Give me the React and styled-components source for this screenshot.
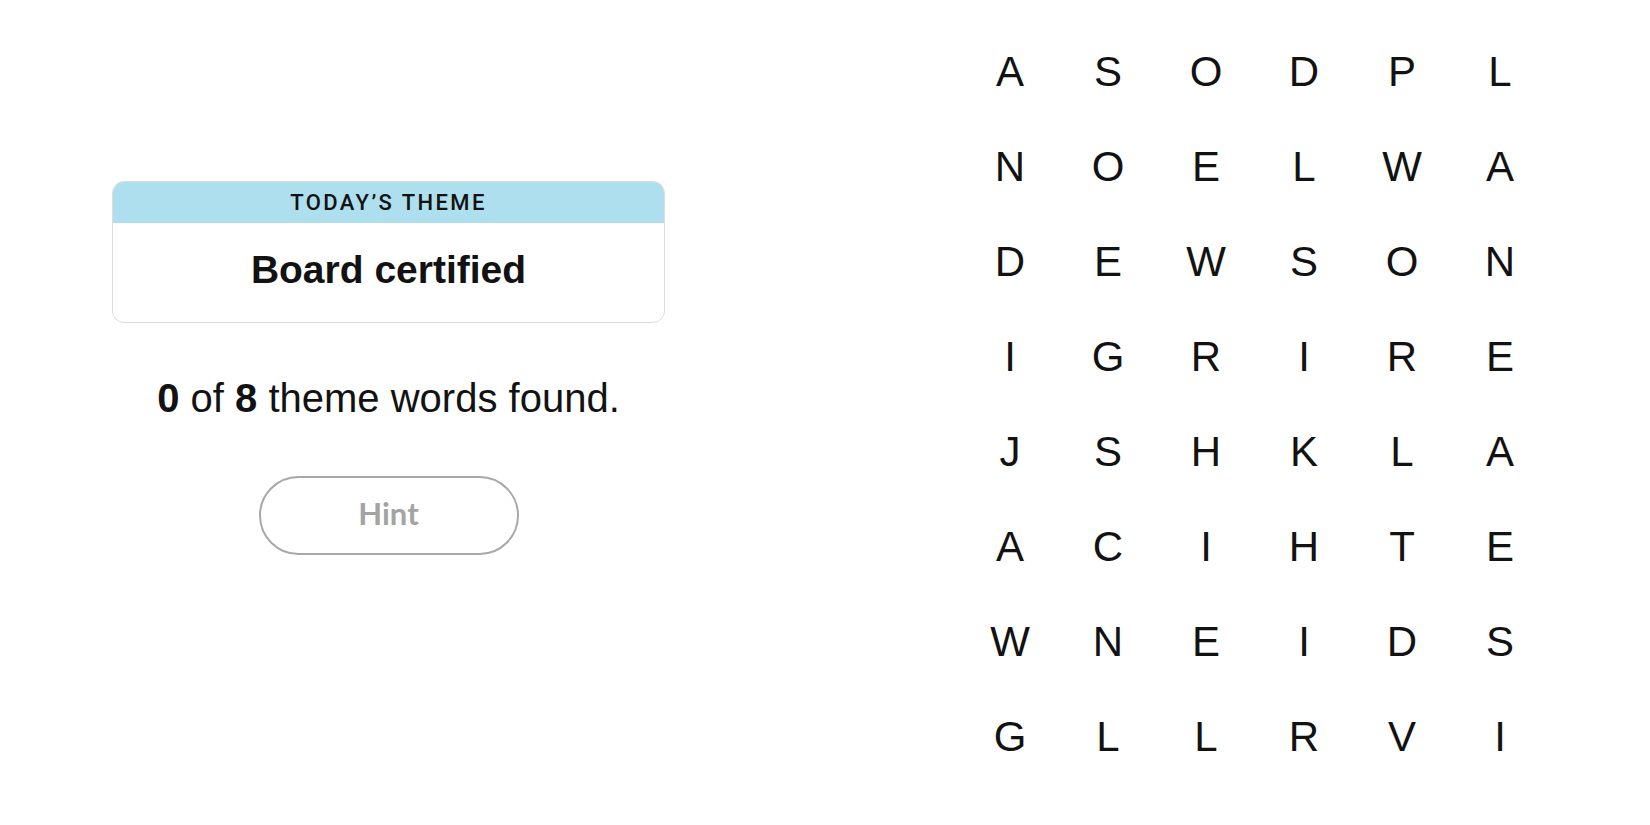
import styled, { createGlobalStyle } from "styled-components";

const letters = [
  "ASODPL",
  "NOELWA",
  "DEWSON",
  "IGRIRE",
  "JSHKLA",
  "ACIHTE",
  "WNEIDS",
  "GLLRVI",
];

function App() {
  return (
    <>
      <GlobalStyle />
      <Page>
        <InfoPanel>
          <ThemeCard>
            <ThemeLabel>TODAY’S THEME</ThemeLabel>
            <ThemeTitle>Board certified</ThemeTitle>
          </ThemeCard>
          <Progress>
            <b>0</b> of <b>8</b> theme words found.
          </Progress>
          <HintButton disabled>Hint</HintButton>
        </InfoPanel>
        <BoardPanel>
          <Board>
            {letters.map((row, r) =>
              row.split("").map((ch, c) => <Cell key={r + "-" + c}>{ch}</Cell>)
            )}
          </Board>
        </BoardPanel>
      </Page>
    </>
  );
}

export default App;

/////////// styled-component

const GlobalStyle = createGlobalStyle`
  body {
    margin: 0;
    background: #ffffff;
    color: #121212;
    font-family: "Liberation Sans", Arial, sans-serif;
  }
`;

const Page = styled.div`
  display: flex;
  width: 1650px;
  height: 825px;
  overflow: hidden;
`;

const InfoPanel = styled.div`
  display: flex;
  flex-direction: column;
  align-items: center;
  width: 777px;
  padding-top: 181px;
`;

const ThemeCard = styled.div`
  display: flex;
  flex-direction: column;
  width: 553px;
  height: 142px;
  box-sizing: border-box;
  border: solid 1px #dcdcdc;
  border-radius: 12px;
  overflow: hidden;
`;

const ThemeLabel = styled.div`
  display: flex;
  justify-content: center;
  align-items: center;
  height: 41px;
  background-color: #aedfee;
  font-family: Roboto, "Liberation Sans", sans-serif;
  font-weight: 500;
  font-size: 22px;
  letter-spacing: 2.4px;
  color: #121212;
`;

const ThemeTitle = styled.div`
  display: flex;
  flex: 1;
  justify-content: center;
  align-items: center;
  padding-bottom: 6px;
  font-weight: 700;
  font-size: 39px;
  color: #121212;
`;

const Progress = styled.p`
  margin: 52px 0 0;
  font-size: 40px;
  line-height: 46px;
  color: #121212;

  b {
    font-weight: 700;
  }
`;

const HintButton = styled.button`
  width: 260px;
  height: 79px;
  margin-top: 55px;
  padding: 0 0 6px;
  border: solid 2px #a8a8a8;
  border-radius: 40px;
  background: #ffffff;
  font-family: Lato, "Liberation Sans", sans-serif;
  font-weight: 700;
  font-size: 31px;
  color: #a3a3a3;
`;

const BoardPanel = styled.div`
  display: flex;
  flex: 1;
  padding: 24px 0 0 184px;
`;

const Board = styled.div`
  display: grid;
  grid-template-columns: repeat(6, 98px);
  grid-auto-rows: 95px;
`;

const Cell = styled.div`
  display: flex;
  justify-content: center;
  align-items: center;
  font-size: 42px;
  color: #121212;
`;
